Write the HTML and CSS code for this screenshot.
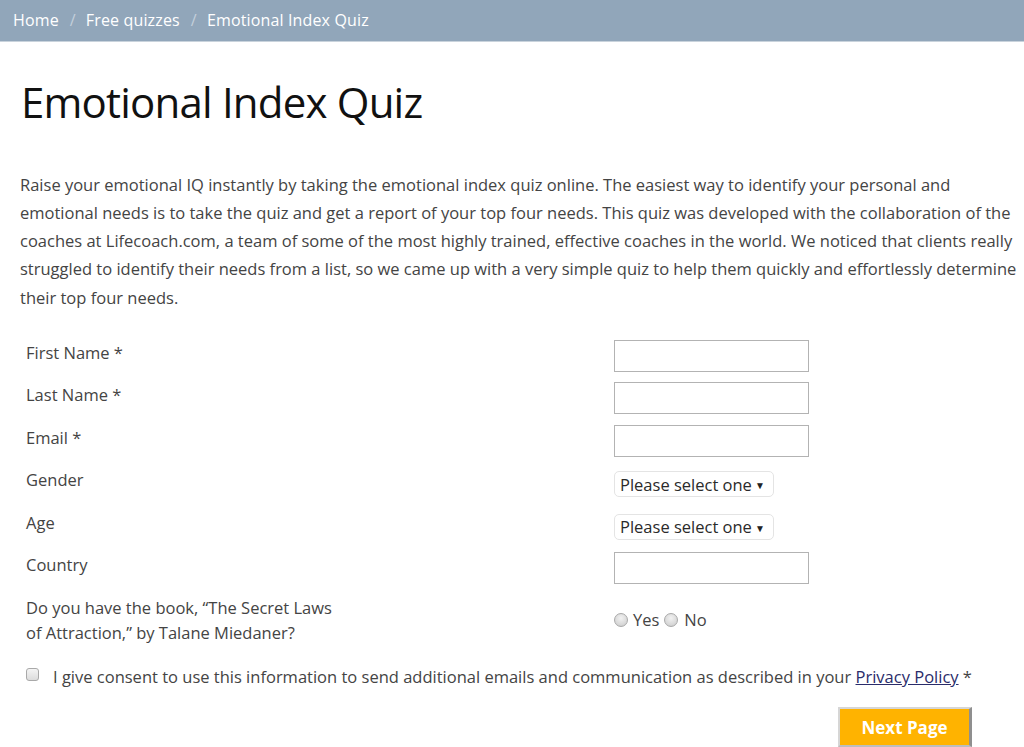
FILE: index.html
```
<!DOCTYPE html>
<html lang="en">
<head>
<meta charset="utf-8">
<title>Emotional Index Quiz</title>
<link rel="stylesheet" href="styles.css">
</head>
<body>
<nav class="crumbs">
  <a href="#">Home</a><span class="sep">/</span><a href="#">Free quizzes</a><span class="sep">/</span><span class="current">Emotional Index Quiz</span>
</nav>
<main class="page">
  <h1 class="title">Emotional Index Quiz</h1>
  <p class="intro">Raise your emotional IQ instantly by taking the emotional index quiz online. The easiest way to identify your personal and emotional needs is to take the quiz and get a report of your top four needs. This quiz was developed with the collaboration of the coaches at Lifecoach.com, a team of some of the most highly trained, effective coaches in the world. We noticed that clients really struggled to identify their needs from a list, so we came up with a very simple quiz to help them quickly and effortlessly determine their top four needs.</p>
  <form class="quiz">
    <div class="row"><label class="lbl">First Name *</label><div class="field"><input class="txt" type="text"></div></div>
    <div class="row"><label class="lbl">Last Name *</label><div class="field"><input class="txt" type="text"></div></div>
    <div class="row"><label class="lbl">Email *</label><div class="field"><input class="txt" type="text"></div></div>
    <div class="row"><label class="lbl">Gender</label><div class="field"><span class="sel"><select><option>Please select one</option></select></span></div></div>
    <div class="row"><label class="lbl">Age</label><div class="field"><span class="sel"><select><option>Please select one</option></select></span></div></div>
    <div class="row"><label class="lbl">Country</label><div class="field"><input class="txt" type="text"></div></div>
    <div class="row row-mid"><label class="lbl">Do you have the book, “The Secret Laws of Attraction,” by Talane Miedaner?</label><div class="field radios"><input class="rad" type="radio" name="book"><span class="opt">Yes</span><input class="rad" type="radio" name="book"><span class="opt">No</span></div></div>
    <div class="consent"><input class="chk" type="checkbox"><span class="consent-text">I give consent to use this information to send additional emails and communication as described in your <a href="#" class="policy">Privacy Policy</a> *</span></div>
    <div class="actions"><button type="button" class="next">Next Page</button></div>
  </form>
</main>
</body>
</html>
```
FILE: styles.css
```
* { box-sizing: border-box; }
html, body { margin: 0; padding: 0; background: #fff; }
body {
  font-family: "Open Sans", "Liberation Sans", sans-serif;
  color: #444;
  font-size: 16.5px;
}
.crumbs {
  height: 42px;
  line-height: 41px;
  background: #91a6ba;
  border-bottom: 1px solid #c9d3dc;
  padding-left: 13px;
  color: #fff;
  font-size: 16px;
  letter-spacing: 0.15px;
  white-space: nowrap;
}
.crumbs a { color: #fff; text-decoration: none; }
.crumbs .sep { color: #c3cfda; padding: 0 10px 0 11px; }
.page { padding: 0 4px 0 20px; }
.title {
  margin: 34px 0 0 1px;
  font-size: 42px;
  line-height: 52px;
  font-weight: 400;
  letter-spacing: -0.8px;
  color: #111;
}
.intro {
  margin: 42.5px 0 0;
  line-height: 28.25px;
  color: #444;
}
.quiz { margin-top: 28px; padding-left: 6px; }
.row {
  display: grid;
  grid-template-columns: 588px 1fr;
  align-items: start;
  min-height: 42.5px;
  padding-bottom: 10.5px;
}
.lbl { line-height: 25px; max-width: 320px; color: #444; }
.txt {
  width: 195px;
  height: 32px;
  border: 1px solid #b3b3b3;
  margin: 0;
  font: inherit;
}
.sel { position: relative; display: inline-block; margin-top: 4px; }
.sel select {
  appearance: none;
  -webkit-appearance: none;
  width: 160px;
  height: 26px;
  border: 1px solid #e4e4e4;
  border-radius: 5px;
  background: #fff;
  font-family: inherit;
  font-size: 16.5px;
  color: #2a2a2a;
  padding: 0 0 0 5px;
  margin: 0;
}
.sel::after {
  content: "▼";
  position: absolute;
  right: 9px;
  top: 7px;
  font-size: 10px;
  color: #222;
  pointer-events: none;
}
.row-mid { align-items: center; }
.radios { display: flex; align-items: center; line-height: 25px; }
.rad {
  appearance: none;
  -webkit-appearance: none;
  width: 14px;
  height: 14px;
  margin: 0 5px 0 0;
  border-radius: 50%;
  border: 1px solid #a9a9a9;
  background: radial-gradient(circle at 50% 35%, #f2f2f2 0%, #d6d6d6 70%, #c8c8c8 100%);
}
.opt { margin-right: 4px; color: #444; }
.opt + .rad { margin-left: 1px; margin-right: 6px; }
.consent {
  display: flex;
  align-items: flex-start;
  margin-top: 9px;
  line-height: 25px;
}
.chk {
  appearance: none;
  -webkit-appearance: none;
  width: 13px;
  height: 13px;
  margin: 4px 14px 0 0;
  border: 1px solid #a9a9a9;
  border-radius: 3px;
  background: linear-gradient(#f4f4f4, #dcdcdc);
  flex: none;
}
.policy { color: #2a2c6a; text-decoration: underline; }
.actions {
  display: flex;
  justify-content: flex-end;
  margin-top: 18px;
  padding-right: 48px;
}
.next {
  width: 134px;
  height: 40px;
  background: #ffb300;
  color: #fff;
  font-family: "Open Sans", "Liberation Sans", sans-serif;
  font-weight: 700;
  font-size: 17px;
  border-style: solid;
  border-width: 2px 3px 2px 2px;
  border-color: #d6d6d6 #8f8f8f #bdbdbd #d6d6d6;
  padding: 0;
  margin: 0;
}
```
